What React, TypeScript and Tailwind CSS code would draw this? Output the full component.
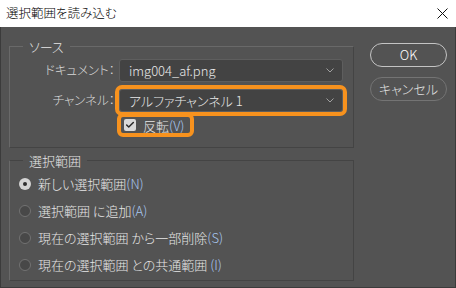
import { Check } from 'lucide-react'

const jp = { fontFamily: '"Noto Sans CJK JP", "Noto Sans", sans-serif' }

function Mnemonic({ k }: { k: string }) {
  return <span className="text-[#a9c8f0]">({k})</span>
}

function Dropdown({ value }: { value: string }) {
  return (
    <div className="h-[23px] w-[224px] rounded-[3px] border border-[#5e5e5e] bg-[#434343] flex items-center justify-between pl-[9px] pr-[8px]">
      <span className="text-[13px] text-[#e8e8e8] leading-none">{value}</span>
      <svg width="8" height="5" viewBox="0 0 8 5" className="text-[#a0a0a0]">
        <path d="M0.5 0.5 L4 4 L7.5 0.5" fill="none" stroke="currentColor" strokeWidth="1" />
      </svg>
    </div>
  )
}

function Radio({ checked, children }: { checked?: boolean; children: React.ReactNode }) {
  return (
    <div className="h-[27px] flex items-center pl-[9px]">
      {checked ? (
        <span className="w-[12px] h-[12px] rounded-full bg-[#d4d4d4] flex items-center justify-center">
          <span className="w-[4px] h-[4px] rounded-full bg-[#2e2e2e]" />
        </span>
      ) : (
        <span className="w-[12px] h-[12px] rounded-full bg-[#484848] border border-[#727272]" />
      )}
      <span className="ml-[7px] text-[13px] text-[#e6e6e6] whitespace-nowrap">{children}</span>
    </div>
  )
}

export default function App() {
  return (
    <div
      className="w-[456px] h-[288px] flex flex-col select-none font-light [font-feature-settings:'palt']"
      style={jp}
    >
      {/* Title bar */}
      <div className="h-[27px] bg-white flex items-center justify-between pl-[6px] pr-[8px]">
        <span className="text-[12.5px] text-black">選択範囲を読み込む</span>
        <svg width="11" height="11" viewBox="0 0 11 11">
          <path d="M0.5 0.5 L10.5 10.5 M10.5 0.5 L0.5 10.5" stroke="#111" strokeWidth="1" />
        </svg>
      </div>

      {/* Body */}
      <div className="flex-1 bg-[#535353] border-x border-b border-[#3b3b3b] flex pl-[8px] pr-[8px]">
        <div className="w-[345px] flex flex-col pt-[11px]">
          {/* Source */}
          <fieldset className="border border-t-[#696969] border-l-[#696969] border-r-[#444444] border-b-[#444444] h-[110px]">
            <legend className="ml-[13px] px-[6px] text-[13px] leading-[17px] text-[#e6e6e6]">ソース</legend>
            <div className="flex flex-col pt-[4px]">
              <div className="flex items-center">
                <span className="w-[105px] text-right text-[12.5px] text-[#d8d8d8] mr-[4px]">ドキュメント：</span>
                <Dropdown value="img004_af.png" />
              </div>
              <div className="flex items-center mt-[7px]">
                <span className="w-[105px] text-right text-[12.5px] text-[#d8d8d8] mr-[4px]">チャンネル：</span>
                <div className="relative">
                  <Dropdown value="アルファチャンネル 1" />
                  <div className="absolute -inset-[4px] border-[4px] border-[#f7921e] rounded-[7px]" />
                </div>
              </div>
              <div className="flex mt-[1px] ml-[107px]">
                <div className="h-[24px] w-[77px] border-[4px] border-[#f7921e] rounded-[6px] flex items-center pl-[3px]">
                  <span className="w-[12px] h-[12px] rounded-[2px] bg-[#dadada] flex items-center justify-center">
                    <Check size={10} strokeWidth={3.5} color="#2a2a2a" />
                  </span>
                  <span className="ml-[7px] text-[13px] text-[#e6e6e6] leading-none">
                    反転<Mnemonic k="V" />
                  </span>
                </div>
              </div>
            </div>
          </fieldset>

          {/* Selection */}
          <fieldset className="mt-[4px] border border-t-[#444444] border-l-[#696969] border-r-[#444444] border-b-[#444444] h-[129px]">
            <legend className="ml-[13px] px-[6px] text-[13px] leading-[17px] text-[#e6e6e6]">選択範囲</legend>
            <div className="flex flex-col pt-[1px]">
              <Radio checked>
                新しい選択範囲<Mnemonic k="N" />
              </Radio>
              <Radio>
                選択範囲 に追加<Mnemonic k="A" />
              </Radio>
              <Radio>
                現在の選択範囲 から一部削除<Mnemonic k="S" />
              </Radio>
              <Radio>
                現在の選択範囲 との共通範囲 <Mnemonic k="I" />
              </Radio>
            </div>
          </fieldset>
        </div>

        {/* Buttons */}
        <div className="ml-[16px] flex flex-col gap-[10px] pt-[16px]">
          <button className="w-[77px] h-[24px] rounded-full border-[1.5px] border-[#c4c4c4] text-[13px] text-white">
            OK
          </button>
          <button className="w-[77px] h-[24px] rounded-full border border-[#747474] text-[13px] text-[#e2e2e2]">
            キャンセル
          </button>
        </div>
      </div>
    </div>
  )
}
